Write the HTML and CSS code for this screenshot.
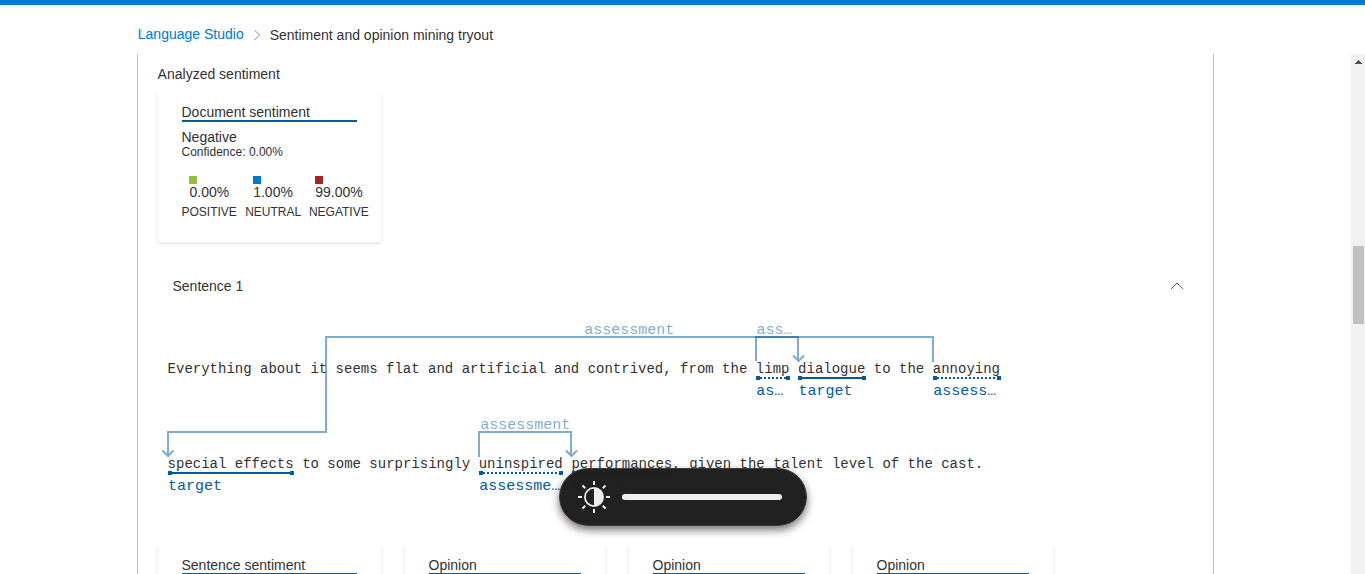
FILE: index.html
```html
<!DOCTYPE html>
<html lang="en">
<head>
<meta charset="utf-8">
<title>Sentiment and opinion mining tryout</title>
<link rel="stylesheet" href="styles.css">
</head>
<body>
<div class="topbar"></div>
<nav class="breadcrumb">
  <a class="crumb-link">Language Studio</a>
  <svg class="crumb-chevron" width="8" height="12" viewBox="0 0 8 12"><path d="M1.5 1 6.5 6 1.5 11" fill="none" stroke="#8a8886"/></svg>
  <span class="crumb-current">Sentiment and opinion mining tryout</span>
</nav>
<div class="body-row">
  <main class="panel">
    <h2 class="section-title">Analyzed sentiment</h2>
    <section class="card document-card">
      <div class="card-title"><span>Document sentiment</span></div>
      <div class="verdict">Negative</div>
      <div class="confidence">Confidence: 0.00%</div>
      <div class="scores">
        <div class="score"><i class="swatch positive"></i><span class="value">0.00%</span><span class="name">POSITIVE</span></div>
        <div class="score"><i class="swatch neutral"></i><span class="value">1.00%</span><span class="name">NEUTRAL</span></div>
        <div class="score negative-score"><i class="swatch negative"></i><span class="value">99.00%</span><span class="name">NEGATIVE</span></div>
      </div>
    </section>
    <div class="sentence-header">
      <span>Sentence 1</span>
      <svg width="14" height="8" viewBox="0 0 14 8"><path d="M1 7 7 1 13 7" fill="none" stroke="#605e5c"/></svg>
    </div>
    <div class="diagram">
      <div class="line"><span>Everything about it seems flat and artificial and contrived, from the </span><span class="token">limp<i class="mark dotted"></i><b class="label">as…</b></span><span> </span><span class="token">dialogue<i class="mark"></i><b class="label">target</b></span><span> to the </span><span class="token">annoying<i class="mark dotted"></i><b class="label">assess…</b></span></div>
      <div class="line"><span class="token">special effects<i class="mark"></i><b class="label">target</b></span><span> to some surprisingly </span><span class="token">uninspired<i class="mark dotted"></i><b class="label">assessme…</b></span><span> </span><span class="token">performances<i class="mark"></i><b class="label">target</b></span><span>, given the talent level of the cast.</span></div>
      <svg class="relations" width="860" height="190" viewBox="0 0 860 190">
        <g class="connector">
          <path d="M773 52V27H166V122H8V146"/><path d="M2.5 140.5 8 146 13.5 140.5"/>
        </g>
        <g class="connector">
          <path d="M596 51V27H638V50"/><path d="M633 45.500 638.500 51 644 45.500"/>
        </g>
        <g class="connector">
          <path d="M319 147V122H411V145"/><path d="M406 140.500 411.500 146 417 140.500"/>
        </g>
        <text x="424.300" y="24">assessment</text>
        <text x="596.500" y="24">ass…</text>
        <text x="320.300" y="119">assessment</text>
      </svg>
    </div>
    <div class="card-row">
      <section class="card sentence-card"><div class="card-title"><span>Sentence sentiment</span></div></section>
      <section class="card opinion-card"><div class="card-title"><span>Opinion</span></div></section>
      <section class="card opinion-card"><div class="card-title"><span>Opinion</span></div></section>
      <section class="card opinion-card"><div class="card-title"><span>Opinion</span></div></section>
    </div>
  </main>
  <div class="scrollbar">
    <svg width="7" height="4" viewBox="0 0 7 4" shape-rendering="crispEdges"><path d="M3 0h1v1h1v1h1v1h1v1H0V3h1V2h1V1h1z" fill="#505050"/></svg>
    <div class="thumb"></div>
  </div>
</div>
<div class="brightness">
  <svg width="34" height="34" viewBox="-17 -17 34 34">
    <circle r="9.100" fill="none" stroke="#eeeeec" stroke-width="1.800"/>
    <path d="M0-9A9 9 0 0 1 0 9Z" fill="#eeeeec"/>
    <path d="M0-16V-12M0 12V16M-16 0H-12M12 0H16M-11.500-11.500-8.800-8.800M8.800 8.800 11.500 11.500M-11.500 11.500-8.800 8.800M8.800-8.800 11.500-11.500" stroke="#eeeeec" stroke-width="2"/>
  </svg>
  <div class="level"></div>
</div>
</body>
</html>
```
FILE: styles.css
```css
* { box-sizing: border-box; }
body {
  margin: 0;
  height: 574px;
  overflow: hidden;
  display: flex;
  flex-direction: column;
  background: #fff;
  color: #323130;
  font: 14px/16px "Liberation Sans", Arial, sans-serif;
}
.topbar { height: 5px; flex: none; background: #0078d4; }
.breadcrumb {
  height: 49px;
  flex: none;
  display: flex;
  align-items: center;
  padding: 10px 0 0 137.800px;
}
.crumb-link { color: #0078d4; padding-bottom: 1px; }
.crumb-chevron { margin: 1px 8px 0 9px; }
.crumb-current { padding-top: 1px; margin-left: 1px; }
.body-row {
  height: 520px;
  flex: none;
  display: flex;
  justify-content: space-between;
}
.panel {
  width: 1077px;
  margin-left: 137px;
  padding: 12px 20px 0;
  border: solid #c1c1c1;
  border-width: 0 1px;
  overflow: hidden;
}
.section-title { margin: 0 0 10px -.400px; font-size: 14px; line-height: 16px; font-weight: 400; }
.card {
  padding: 12px 24px 0;
  background: #fff;
  box-shadow: 0 1.6px 3.6px rgba(0, 0, 0, .132), 0 .3px .9px rgba(0, 0, 0, .108);
}
.card-title { height: 18px; border-bottom: 2px solid #005a9e; }
.card-title span { margin-left: -.500px; }
.document-card { width: 223px; height: 150px; }
.verdict { margin: 7px 0 0 -.500px; }
.confidence { margin-left: -.500px; font-size: 12px; line-height: 14px; }
.scores { display: flex; gap: 7.700px; margin: 17px 0 0 -.500px; }
.score { width: 56px; display: flex; flex-direction: column; flex: none; }
.swatch { width: 8px; height: 8px; margin-left: 7.500px; }
.positive { background: #92c039; }
.neutral { background: #0078d4; }
.negative { background: #a4262c; }
.value { margin-left: 8px; }
.negative-score .swatch, .negative-score .value { margin-left: 6.300px; }
.name { margin-top: 5px; font-size: 12px; line-height: 14px; }
.sentence-header {
  display: flex;
  justify-content: space-between;
  align-items: center;
  height: 16px;
  margin: 36px 9px 16px 14.500px;
}
.diagram {
  position: relative;
  height: 235px;
  margin-left: -8px;
  padding: 51px 0 0 17.600px;
  font-family: "Liberation Mono", monospace;
}
.line { height: 95px; white-space: pre; display: flex; }
.line span { flex: none; }
.line > * + * { margin-left: .130px; }
.token { display: flex; flex-direction: column; }
.mark {
  height: 4px;
  margin: -1px -.600px 0 .400px;
  background:
    linear-gradient(#005a9e, #005a9e) left / 4px 4px no-repeat,
    linear-gradient(#005a9e, #005a9e) right / 4px 4px no-repeat,
    linear-gradient(#005a9e, #005a9e) center / 100% 2px no-repeat;
}
.dotted {
  background:
    linear-gradient(#005a9e, #005a9e) left / 4px 4px no-repeat,
    linear-gradient(#005a9e, #005a9e) right / 4px 4px no-repeat,
    repeating-linear-gradient(90deg, #005a9e 0 2px, transparent 2px 4px) center / 100% 2px no-repeat;
}
.label { width: 0; margin: 3px 0 0 .500px; font-size: 15px; line-height: 17px; font-weight: 400; color: #005a9e; }
.relations { position: absolute; left: 10px; top: 0; font-size: 15px; }
.relations text { fill: #005a9e; opacity: .5; }
.connector { fill: none; stroke: #005a9e; stroke-width: 2; opacity: .5; }
.card-row { display: flex; gap: 24px; }
.card-row .card { height: 150px; flex: none; }
.sentence-card { width: 223px; }
.opinion-card { width: 200px; }
.scrollbar {
  width: 14px;
  padding: 6px 1px 0 2px;
  background: #f1f1f1;
  display: flex;
  flex-direction: column;
}
.scrollbar svg { margin-left: 2px; }
.thumb { height: 78px; margin-top: 182px; background: #c1c1c1; }
.brightness {
  position: fixed;
  left: 559px;
  top: 468px;
  width: 248px;
  height: 58px;
  padding-left: 17px;
  display: flex;
  align-items: center;
  gap: 11px;
  border: 1px solid #3c3c3c;
  border-radius: 29px;
  background: rgba(30, 30, 30, .99);
  box-shadow: 0 4px 9px rgba(30, 20, 20, .6);
}
.level { width: 160px; height: 6px; border-radius: 3px; background: #eeeeec; }
```
